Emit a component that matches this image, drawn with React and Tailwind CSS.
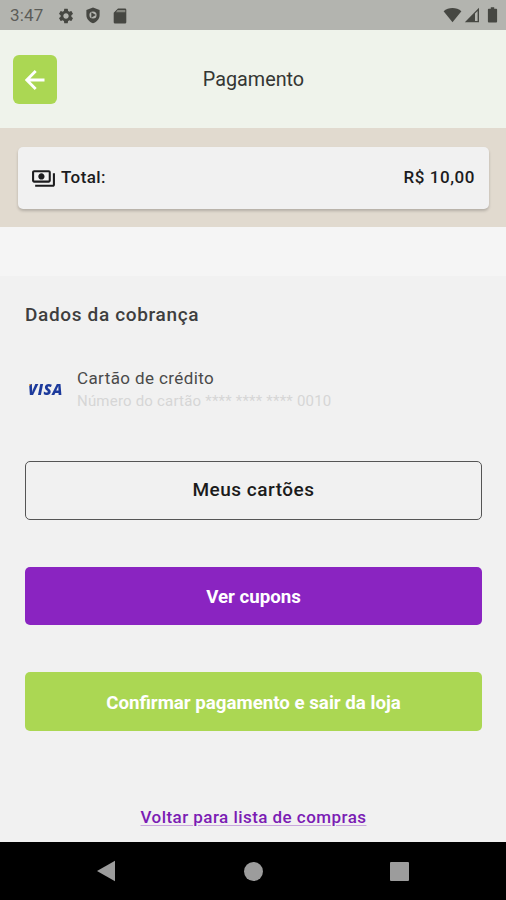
import { MdOutlinePayments, MdSettings } from 'react-icons/md'

function StatusBar() {
  return (
    <div className="flex h-[30px] items-center justify-between bg-[#b3b4af] pl-[10px] pr-[8px] text-[#464742]">
      <div className="flex items-center pt-px">
        <span className="w-[47px] text-[17px] leading-none tracking-[0.2px] text-[#5c5d59]">3:47</span>
        <MdSettings className="size-[18px]" />
        <svg viewBox="0 0 16 18" className="ml-[10px] h-[17px] w-[16px]" fill="currentColor">
          <path d="M8 .5 15 3.2v5.3c0 4-2.9 7.4-7 8.7-4.1-1.3-7-4.7-7-8.7V3.2z" />
          <circle cx="8" cy="8.5" r="3.8" fill="#b3b4af" />
          <path d="M6.2 5.6v5.8L11 8.5z" />
        </svg>
        <svg viewBox="0 0 14 16" className="ml-[12px] h-[16px] w-[14px]" fill="currentColor">
          <path d="M5 .5h7a1.3 1.3 0 0 1 1.3 1.3v12.4a1.3 1.3 0 0 1-1.3 1.3H2a1.3 1.3 0 0 1-1.3-1.3V4.8z" />
          <path d="M4.5 2h7.8v2.2H3z" fill="#85867f" />
        </svg>
      </div>
      <div className="flex items-center">
        <svg viewBox="0 0 19 16" className="h-[16px] w-[19px]" fill="currentColor">
          <path d="M.6 4.2C5.5-.2 13.5-.2 18.4 4.2L9.5 15.3z" />
        </svg>
        <svg viewBox="0 0 16 16" className="ml-[2px] h-[16px] w-[16px]" fill="currentColor">
          <path d="M.8 15.2 15 .8v14.4zM11 6.5v7.4h2.6V3.9z" fillRule="evenodd" />
        </svg>
        <svg viewBox="0 0 10 16" className="ml-[7px] h-[16px] w-[11px]" fill="currentColor">
          <path d="M3.3.3h3.4v1.5h2.1c.4 0 .8.3.8.8v12c0 .5-.4.9-.8.9H1.2c-.4 0-.8-.4-.8-.9v-12c0-.5.4-.8.8-.8h2.1z" />
        </svg>
      </div>
    </div>
  )
}

function Header() {
  return (
    <header className="grid h-[98px] grid-cols-[44px_1fr_44px] items-center bg-[#eff3eb] px-[13px]">
      <button aria-label="Voltar" className="flex h-[49px] w-11 items-center justify-center rounded-[6px] bg-[#abd753] text-white">
        <svg viewBox="0 0 20 20" className="mt-px size-[20px]" fill="none" stroke="currentColor" strokeWidth="2.8">
          <path d="M19.5 10H2M10.7 1 1.8 10l8.9 9" />
        </svg>
      </button>
      <h1 className="pl-px pt-[2px] text-center text-[19.8px] leading-6 text-[#343633]">Pagamento</h1>
    </header>
  )
}

function Total() {
  return (
    <section className="h-[99px] bg-[#e1dacf] pl-[18px] pr-[17px] pt-[19px]">
      <div className="flex h-[62px] items-center justify-between rounded-[5px] bg-[#f1f1f1] pl-[13px] pr-[14px] text-[17px] font-medium text-[#1c1c1e] shadow-[0_2px_3px_rgba(0,0,0,0.2)]">
        <span className="flex items-center gap-[5px] tracking-[0.4px]">
          <MdOutlinePayments className="size-[25px]" />
          Total:
        </span>
        <span className="tracking-[0.55px]">R$ 10,00</span>
      </div>
    </section>
  )
}

function NavBar() {
  return (
    <nav className="flex h-[58px] items-center justify-between bg-black px-[96px] text-[#9c9c9c]">
      <svg viewBox="0 0 20 22" className="h-[22px] w-[20px]" fill="currentColor">
        <path d="M1 11 19 .8v20.4z" />
      </svg>
      <span className="size-[19px] rounded-full bg-[#9c9c9c]" />
      <span className="mr-px size-[19px] rounded-[1px] bg-[#9c9c9c]" />
    </nav>
  )
}

export default function App() {
  return (
    <div className="flex h-[900px] w-[506px] flex-col overflow-hidden bg-[#f1f1f1] font-['Roboto',sans-serif]">
      <StatusBar />
      <Header />
      <Total />
      <div className="h-[49px] bg-[#f5f5f5]" />

      <main className="flex flex-1 flex-col pl-[25px] pr-[24px]">
        <h2 className="mt-[27px] text-[19px] font-medium leading-6 tracking-[0.65px] text-[#3e3e3e]">Dados da cobrança</h2>

        <div className="mt-[40px] flex h-[44px] items-center">
          {/* bandeira do cartão */}
          <span className="w-[52px] bg-[linear-gradient(135deg,#e9a13b_0,#e9a13b_7.5px,#1c3a9c_8.5px)] bg-clip-text pl-[3px] font-['Open_Sans',sans-serif] text-[15px] font-extrabold italic leading-5 tracking-[0.5px] text-transparent">
            VISA
          </span>
          <div>
            <p className="text-[17px] leading-[23px] tracking-[0.4px] text-[#4a4a4a]">Cartão de crédito</p>
            <p className="pt-px text-[15px] leading-[21px] tracking-[0.2px] text-[#d6d6d6]">Número do cartão **** **** **** 0010</p>
          </div>
        </div>

        <button className="mt-[50px] h-[59px] rounded-[5px] border border-[#555] text-[19px] font-medium tracking-[0.5px] text-[#1b1b1b]">
          Meus cartões
        </button>
        <button className="mt-[47px] h-[58px] rounded-[5px] bg-[#8a24c1] pt-[2px] text-[18.7px] font-bold text-white">
          Ver cupons
        </button>
        <button className="mt-[47px] h-[59px] rounded-[5px] bg-[#abd753] pt-[3px] text-[18.7px] font-bold text-white">
          Confirmar pagamento e sair da loja
        </button>
        <a className="mt-[74px] self-center text-[17px] font-medium leading-6 tracking-[0.45px] text-[#7b1cb4] underline decoration-[#c9a6dd] underline-offset-2">
          Voltar para lista de compras
        </a>
      </main>

      <NavBar />
    </div>
  )
}
